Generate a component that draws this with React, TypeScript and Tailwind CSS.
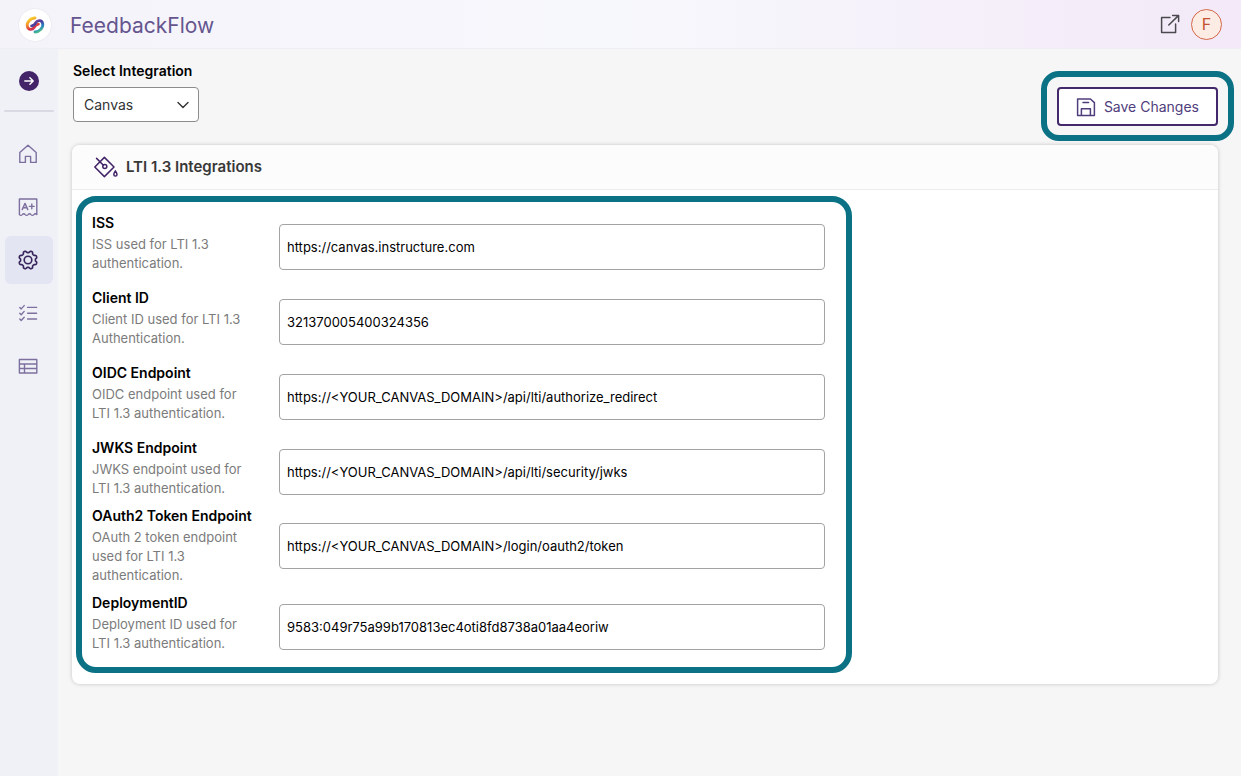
import type { ReactNode } from "react";

const fields = [
  { id: "iss", label: "ISS", help: "ISS used for LTI 1.3 authentication.", value: "https://canvas.instructure.com" },
  { id: "client-id", label: "Client ID", help: "Client ID used for LTI 1.3 Authentication.", value: "321370005400324356" },
  { id: "oidc", label: "OIDC Endpoint", help: "OIDC endpoint used for LTI 1.3 authentication.", value: "https://<YOUR_CANVAS_DOMAIN>/api/lti/authorize_redirect" },
  { id: "jwks", label: "JWKS Endpoint", help: "JWKS endpoint used for LTI 1.3 authentication.", value: "https://<YOUR_CANVAS_DOMAIN>/api/lti/security/jwks" },
  { id: "token", label: "OAuth2 Token Endpoint", help: "OAuth 2 token endpoint used for LTI 1.3 authentication.", value: "https://<YOUR_CANVAS_DOMAIN>/login/oauth2/token", tall: true },
  { id: "deployment", label: "DeploymentID", help: "Deployment ID used for LTI 1.3 authentication.", value: "9583:049r75a99b170813ec4oti8fd8738a01aa4eoriw" },
];

function Icon({ children, width = 1.4, className = "size-5" }: { children: ReactNode; width?: number; className?: string }) {
  return (
    <svg viewBox="0 0 20 20" className={className} fill="none" stroke="currentColor" strokeWidth={width} strokeLinejoin="round" strokeLinecap="round" aria-hidden="true">
      {children}
    </svg>
  );
}

const gearPath =
  Array.from({ length: 96 }, (_, i) => {
    const a = (i / 96) * Math.PI * 2;
    const wave = Math.tanh(2 * Math.cos(8 * (a - Math.PI / 8)));
    const r = 8.3 + 0.95 * wave;
    return `${i ? "L" : "M"}${(10 + r * Math.cos(a)).toFixed(2)} ${(10 + r * Math.sin(a)).toFixed(2)}`;
  }).join("") + "Z";

const HomeIcon = () => (
  <Icon>
    <path d="M1.8 8.6 10 1.2l8.2 7.4v9.8h-5.6v-6H7.4v6H1.8Z" />
  </Icon>
);
const GradeIcon = () => (
  <Icon>
    <path d="M1.4 17.6V2h17.4v15.6c-.9-1.2-2-1.2-2.9 0-.9 1-2 1-2.9 0-.9-1.2-2-1.2-2.9 0-.9 1-2 1-2.9 0-.9-1.2-2-1.2-2.9 0-.9 1-2 1-2.9 0Z" />
    <path d="m4.2 12.6 2.8-6.2 2.8 6.2M5.1 10.8h3.8M13.8 7v4.8M11.4 9.4h4.8" />
  </Icon>
);
const GearIcon = () => (
  <Icon width={1.6}>
    <path d={gearPath} />
    <circle cx="10" cy="10" r="3.8" />
  </Icon>
);
const ChecksIcon = () => (
  <Icon>
    <path d="m1.8 4.4 1.4 1.5 3-3.3M1.8 10.2l1.4 1.5 3-3.3M1.8 16l1.4 1.5 3-3.3M9.6 4.4h9M9.6 10.2h9M9.6 16h9" />
  </Icon>
);
const TableIcon = () => (
  <Icon>
    <path d="M1.4 3.5h17.4V17H1.4ZM1.4 8h17.4M1.4 12.5h17.4M6.5 8v9" />
  </Icon>
);

const nav = [
  { label: "Home", icon: <HomeIcon /> },
  { label: "Grades", icon: <GradeIcon /> },
  { label: "Settings", icon: <GearIcon />, active: true },
  { label: "Tasks", icon: <ChecksIcon /> },
  { label: "Reports", icon: <TableIcon /> },
];

function Logo() {
  return (
    <svg viewBox="0 0 20 18" className="h-[18px] w-5" fill="none" strokeWidth="2.8" strokeLinecap="round" aria-hidden="true">
      <defs>
        <linearGradient id="warm" gradientUnits="userSpaceOnUse" x1="6" y1="2" x2="12" y2="14">
          <stop offset="0" stopColor="#f7cf2e" />
          <stop offset="0.35" stopColor="#f2902c" />
          <stop offset="0.7" stopColor="#dc3440" />
          <stop offset="1" stopColor="#b5307c" />
        </linearGradient>
        <linearGradient id="cool" gradientUnits="userSpaceOnUse" x1="8" y1="4" x2="14" y2="16">
          <stop offset="0" stopColor="#8a3a9c" />
          <stop offset="0.4" stopColor="#43429c" />
          <stop offset="0.7" stopColor="#2a84c4" />
          <stop offset="1" stopColor="#4cc08a" />
        </linearGradient>
      </defs>
      <path d="M10 2C5.4 2 1.4 6.400 2.300 10.400C3.200 14.200 7.400 14 9.200 11.400C10 9.800 11 8.400 13.400 8.200" stroke="url(#warm)" />
      <path d="M10 16C14.600 16 18.600 11.600 17.700 7.600C16.800 3.800 12.600 4 10.800 6.600C10 8.200 9 9.600 6.600 9.800" stroke="url(#cool)" />
    </svg>
  );
}

export default function App() {
  return (
    <div className="flex min-h-screen flex-col bg-[#f6f6f6] font-['Inter',sans-serif] text-black">
      <header className="flex h-[49px] items-center border-b border-[#efeef5] bg-linear-to-r from-[#f4f3fa] via-[#f7f8fc] via-50% to-[#f3e9f8] pr-[19px] pl-[18px]">
        <span className="mt-0.5 flex size-[34px] items-center justify-center rounded-full border border-[#ececf2] bg-white">
          <Logo />
        </span>
        <h1 className="mt-1 ml-[18px] text-[21px] leading-7 text-[#65558f]">FeedbackFlow</h1>
        <div className="ml-auto flex items-center gap-[11px]">
          <a href="#open" aria-label="Open in new window" className="text-[#4a4a4e]">
            <Icon width={1.5}>
              <path d="M10 3.6H1.6v14.8h14V10M8.8 11l9.6-9.4M12.6 1.4h6v6" />
            </Icon>
          </a>
          <button type="button" aria-label="Account" className="flex size-[31px] items-center justify-center rounded-full border border-[#d4674a] bg-[#fdece3] text-base text-[#c4502f]">
            F
          </button>
        </div>
      </header>

      <div className="flex flex-1">
        <aside className="flex w-[58px] shrink-0 flex-col items-center bg-[#f0f0f7] pt-[22px]">
          <button type="button" aria-label="Expand menu" className="flex size-5 items-center justify-center rounded-full bg-[#432468] text-white">
            <Icon width={2.4} className="size-3">
              <path d="M3 10h14M11.5 4.500 17 10l-5.5 5.5" />
            </Icon>
          </button>
          <hr className="mt-[19px] h-0.5 w-[50px] rounded-full border-0 bg-[#d8d9e2]" />
          <nav className="mt-[18px] flex flex-col gap-[5px]">
            {nav.map((item) => (
              <a
                key={item.label}
                href={`#${item.label.toLowerCase()}`}
                aria-label={item.label}
                className={
                  item.active
                    ? "flex size-12 items-center justify-center rounded-md bg-[#e3e5f2] pr-0.5 text-[#37245c]"
                    : "flex size-12 items-center justify-center rounded-md pr-0.5 text-[#7d709f]"
                }
              >
                {item.icon}
              </a>
            ))}
          </nav>
        </aside>

        <main className="min-w-0 flex-1 pl-3.5">
          <div className="flex items-start justify-between pr-[7px] pl-px">
            <div className="flex flex-col items-start pt-3">
              <label htmlFor="integration" className="text-sm leading-5 font-semibold">
                Select Integration
              </label>
              <div className="mt-1.5 grid">
                <select id="integration" className="col-start-1 row-start-1 h-[35px] w-[126px] appearance-none rounded-[4px] border border-[#8c8c8c] bg-white pl-2.5 text-sm text-[#333]">
                  <option>Canvas</option>
                </select>
                <svg viewBox="0 0 12 8" className="pointer-events-none col-start-1 row-start-1 mr-2.5 h-2 w-3 self-center justify-self-end" fill="none" stroke="#333" strokeWidth="1.4" strokeLinecap="round" strokeLinejoin="round" aria-hidden="true">
                  <path d="m1 1.4 5 5 5-5" />
                </svg>
              </div>
            </div>
            <div className="mt-[22px] rounded-[18px] border-[6px] border-[#0b7285] bg-[#f6f6f6] px-2.5 pt-2.5 pb-[9px]">
              <button type="button" className="flex h-[39px] items-center gap-2 rounded-[4px] border-2 border-[#43286b] bg-white px-[17px] text-sm text-[#4f3d7c]">
                <Icon width={1.5}>
                  <path d="M1.6 2h12.8l4 3.6v12.8H1.6ZM5.4 18.2v-6.4h9v6.4M7 5.6h5.6" />
                </Icon>
                Save Changes
              </button>
            </div>
          </div>

          <section className="mt-1 mr-[23px] rounded-lg bg-white pb-[11px] shadow-[0_0_4px_rgba(0,0,0,0.2)]">
            <div className="flex h-[45px] items-center gap-2 rounded-t-lg border-b border-[#ececec] bg-[#fcfcfc] pl-[22px]">
              <svg viewBox="0 0 24 24" className="size-6 text-[#432468]" fill="none" stroke="currentColor" strokeWidth="1.5" strokeLinecap="round" strokeLinejoin="round" aria-hidden="true">
                <path d="M10.4 2.4 20 12l-9.6 9.6L.8 12ZM2.6 3.4l6.8 6.9" />
                <circle cx="10.8" cy="11.6" r="2" />
                <path d="M21.4 15.8c1 1.6 1.6 2.6 1.6 3.600a1.6 1.6 0 0 1-3.2 0c0-1 .6-2 1.6-3.600Z" />
              </svg>
              <h2 className="text-[15px] font-semibold text-[#383838]">LTI 1.3 Integrations</h2>
            </div>

            <form className="mt-1.5 mr-1 ml-1 flex max-w-[776px] flex-col gap-[7px] rounded-[20px] border-[6px] border-[#0b7285] px-2.5 pt-[11px] pb-[6px]">
              {fields.map((f) => (
                <div key={f.id} className={f.tall ? "-mt-[7px] flex min-h-20 items-center" : "flex min-h-[68px] items-center"}>
                  <div className="w-[187px] shrink-0 self-stretch pr-[26px]">
                    <label htmlFor={f.id} className="mb-[3px] block text-sm leading-[19px] font-semibold">
                      {f.label}
                    </label>
                    <p id={`${f.id}-help`} className="text-[13px] leading-[19px] text-[#7b7b7b]">
                      {f.help}
                    </p>
                  </div>
                  <input
                    id={f.id}
                    type="text"
                    defaultValue={f.value}
                    aria-describedby={`${f.id}-help`}
                    className="mr-[11px] h-[46px] min-w-0 flex-1 rounded-[4px] border border-[#a3a3a3] bg-white px-[7px] text-[13px]"
                  />
                </div>
              ))}
            </form>
          </section>
        </main>
      </div>
    </div>
  );
}
